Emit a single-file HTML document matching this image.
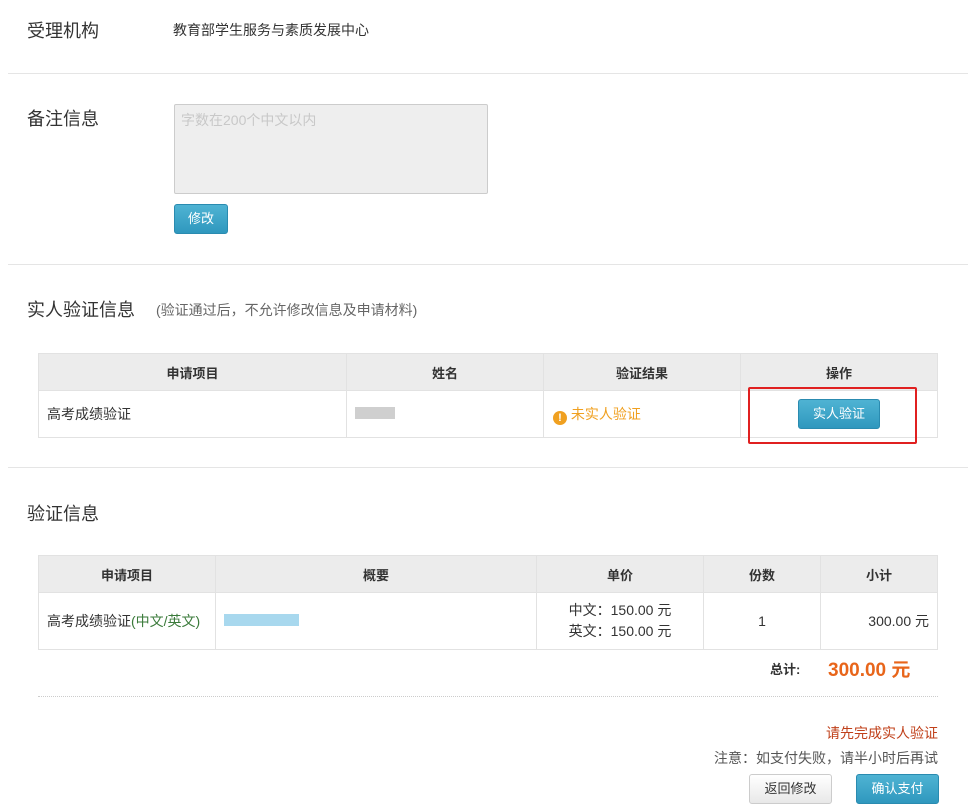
<!DOCTYPE html>
<html><head><meta charset="utf-8"><style>
*{margin:0;padding:0;box-sizing:border-box}
body{width:976px;height:811px;background:#fff;position:relative;overflow:hidden;font-family:"Liberation Sans","Noto Sans CJK SC",sans-serif;color:#333;font-size:14px}
.a{position:absolute;white-space:nowrap}
.hr{position:absolute;left:8px;width:960px;height:1px;background:#e5e5e5}
.h{font-size:18px;color:#333}
.btn{position:absolute;background:linear-gradient(#4fb3d3,#2f98be);border:1px solid #2a8bb0;border-radius:3px;color:#fff;font-size:13px;text-align:center}
.btn2{position:absolute;background:linear-gradient(#fff,#e8e8e8);border:1px solid #ccc;border-radius:3px;color:#333;font-size:13px;text-align:center}
table{position:absolute;border-collapse:collapse;font-size:14px}
td,th{border:1px solid #e2e2e2}
th{background:#ececec;font-weight:bold;color:#333;height:37px;font-size:13px}
</style></head><body>
<div class="a h" style="left:27px;top:17px">受理机构</div>
<div class="a" style="left:173px;top:20px">教育部学生服务与素质发展中心</div>
<div class="hr" style="top:73px"></div>
<div class="a h" style="left:27px;top:105px">备注信息</div>
<div class="a" style="left:174px;top:104px;width:314px;height:90px;background:#eee;border:1px solid #ccc;border-radius:2px"></div>
<div class="a" style="left:181px;top:110px;color:#c8c8c8">字数在200个中文以内</div>
<div class="btn" style="left:174px;top:204px;width:54px;height:30px;line-height:28px">修改</div>
<div class="hr" style="top:264px"></div>
<div class="a h" style="left:27px;top:296px">实人验证信息</div>
<div class="a" style="left:156px;top:300px;color:#666">(验证通过后，不允许修改信息及申请材料)</div>
<table style="left:38px;top:353px;width:900px">
<tr><th style="width:308px">申请项目</th><th style="width:197px">姓名</th><th style="width:197px">验证结果</th><th>操作</th></tr>
<tr style="height:47px"><td style="padding-left:8px">高考成绩验证</td><td style="padding-left:8px"><span style="display:inline-block;width:40px;height:12px;background:#bbb;opacity:.7"></span></td><td style="padding-left:9px;color:#f0a020"><span style="display:inline-block;width:14px;height:14px;border-radius:7px;background:#f0a020;color:#fff;font-size:11px;text-align:center;line-height:14px;font-weight:bold;vertical-align:-2px">!</span> 未实人验证</td><td></td></tr>
</table>
<div class="a" style="left:748px;top:387px;width:169px;height:57px;border:2px solid #e02020;border-radius:2px"></div>
<div class="btn" style="left:798px;top:399px;width:82px;height:30px;line-height:28px">实人验证</div>
<div class="hr" style="top:467px"></div>
<div class="a h" style="left:27px;top:500px">验证信息</div>
<table style="left:38px;top:555px;width:900px">
<tr><th style="width:177px">申请项目</th><th style="width:321px">概要</th><th style="width:167px">单价</th><th style="width:117px">份数</th><th>小计</th></tr>
<tr style="height:57px"><td style="padding-left:8px">高考成绩验证<span style="color:#3a7a3a">(中文/英文)</span></td><td style="padding-left:8px"><span style="display:inline-block;width:75px;height:12px;background:#a8d8ee"></span></td><td style="text-align:center;line-height:21px">中文：150.00 元<br>英文：150.00 元</td><td style="text-align:center">1</td><td style="text-align:right;padding-right:8px">300.00 元</td></tr>
</table>
<div class="a" style="left:770px;top:659px;font-weight:bold;font-size:13px">总计:</div>
<div class="a" style="left:828px;top:655px;font-size:19px;font-weight:bold;color:#e8651a">300.00 元</div>
<div class="a" style="left:38px;top:696px;width:900px;border-top:1px dotted #ccc"></div>
<div class="a" style="right:38px;top:723px;color:#c0401a">请先完成实人验证</div>
<div class="a" style="right:38px;top:748px;color:#555">注意：如支付失败，请半小时后再试</div>
<div class="btn2" style="left:749px;top:774px;width:83px;height:30px;line-height:28px">返回修改</div>
<div class="btn" style="left:856px;top:774px;width:83px;height:30px;line-height:28px">确认支付</div>
</body></html>
